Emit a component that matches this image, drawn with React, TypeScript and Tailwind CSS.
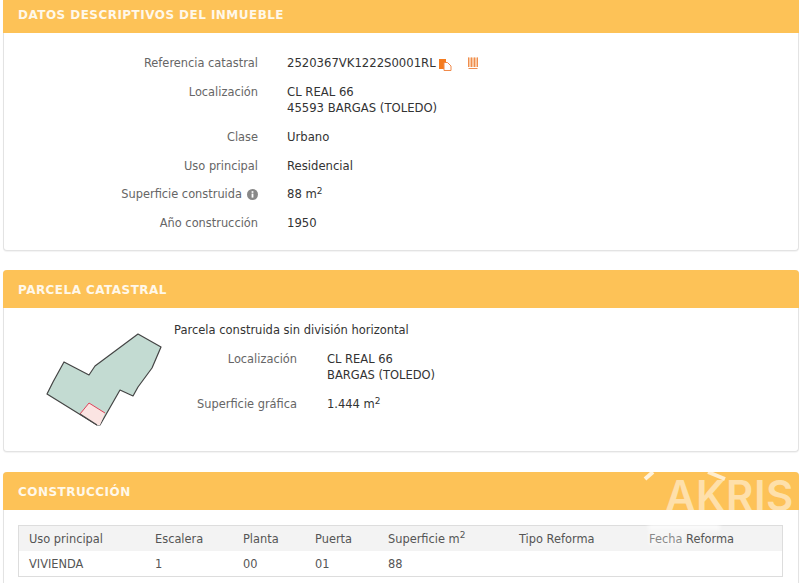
import React from 'react';

const Row = ({ label, children, info }: { label: string; children: React.ReactNode; info?: boolean }) => (
  <div className="flex">
    <div className="w-[254px] shrink-0 flex justify-end items-center h-[16px] gap-[5px] text-[#666666] text-[11.4px]">
      {label}
      {info && (
        <svg width="11" height="11" viewBox="0 0 11 11">
          <circle cx="5.5" cy="5.5" r="5.5" fill="#888888" />
          <rect x="4.6" y="4.6" width="1.8" height="4" fill="#ffffff" />
          <rect x="4.6" y="2.2" width="1.8" height="1.6" fill="#ffffff" />
        </svg>
      )}
    </div>
    <div className="ml-[29px] text-[#333333] text-[11.65px]">{children}</div>
  </div>
);

const Card = ({ title, className, headerClass, children }: { title: string; className: string; headerClass: string; children: React.ReactNode }) => (
  <section className={`ml-[3px] mr-px border border-t-0 border-[#e3e3e3] rounded-[4px] bg-white shadow-[0_1px_1px_rgba(0,0,0,0.05)] ${className}`}>
    <h2 className={`bg-[#fdc257] -mx-px rounded-t-[4px] pl-[15px] flex items-center text-[#fff8ea] font-bold text-[12px] tracking-[0.46px] ${headerClass}`}>{title}</h2>
    {children}
  </section>
);

const cols = 'grid grid-cols-[126px_88px_72px_73px_131px_130px_1fr] pl-[10px] h-[25px] items-center';

const App = () => {
  return (
    <div className="relative w-[800px] h-[583px] overflow-hidden bg-white font-['DejaVu_Sans','Liberation_Sans',sans-serif] text-[11.5px] leading-[16px]">
      <Card title="DATOS DESCRIPTIVOS DEL INMUEBLE" className="h-[251px] rounded-t-none" headerClass="h-[33px] pb-[3px] rounded-t-none">
        <div className="pt-[22px] flex flex-col">
          <div className="mb-[13px]">
            <Row label="Referencia catastral">
              <span className="flex items-center">
                2520367VK1222S0001RL
                <svg className="ml-[3px] mt-[2px]" width="13" height="13" viewBox="0 0 13 13">
                  <path d="M0 1h7v10H0z" fill="#f57c1f" />
                  <path d="M5 4.5h3.5l3.5 3.5v4.5H5z" fill="#ffffff" stroke="#f08a4a" strokeWidth="1" />
                </svg>
                <svg className="ml-[15px]" width="12" height="12" viewBox="0 0 12 12">
                  <path d="M1 0.5h10v9.5H1z" fill="#f9c9a4" />
                  <path d="M1.5 0.5v9.5M4.5 0.5v9.5M7.5 0.5v9.5M10.5 0.5v9.5" stroke="#ef8d4e" strokeWidth="1" />
                  <path d="M1.5 11.5h9" stroke="#ef8d4e" strokeWidth="1" />
                </svg>
              </span>
            </Row>
          </div>
          <div className="mb-[13px]">
            <Row label="Localización">
              CL REAL 66
              <br />
              45593 BARGAS (TOLEDO)
            </Row>
          </div>
          <div className="mb-[13px]">
            <Row label="Clase">Urbano</Row>
          </div>
          <div className="mb-[12px]">
            <Row label="Uso principal">Residencial</Row>
          </div>
          <div className="mb-[13px]">
            <Row label="Superficie construida" info>
              88 m<sup className="text-[9px] leading-none">2</sup>
            </Row>
          </div>
          <Row label="Año construcción">1950</Row>
        </div>
      </Card>

      <Card title="PARCELA CATASTRAL" className="mt-[19px] h-[182px]" headerClass="h-[38px] pt-px">
        <div className="flex">
          <svg className="ml-[40px] mt-[22px] shrink-0" width="120" height="98" viewBox="0 0 120 98">
            <path
              d="M3 64L9 52L20 32L45 45L51 36L94 4L117 17L108 38L94 57L89 66L76 60L56 95L53 95Z"
              fill="#c3dbd2"
              stroke="#444444"
              strokeWidth="1.2"
              strokeLinejoin="round"
            />
            <path d="M36 84L45 73L61 83L56 95L53 95Z" fill="#fbe4e2" />
            <path d="M36 84L45 73L61 83" fill="none" stroke="#e0425a" strokeWidth="1" />
            <path d="M36 84L53 95" fill="none" stroke="#444444" strokeWidth="1.2" />
          </svg>
          <div className="ml-[10px] pt-[14px] text-[#333333] text-[11.5px]">
            <div>Parcela construida sin división horizontal</div>
            <div className="mt-[13px] flex">
              <div className="w-[123px] text-right text-[#666666] text-[11.4px]">Localización</div>
              <div className="ml-[30px]">
                CL REAL 66
                <br />
                BARGAS (TOLEDO)
              </div>
            </div>
            <div className="mt-[13px] flex">
              <div className="w-[123px] text-right text-[#666666] text-[11.4px]">Superficie gráfica</div>
              <div className="ml-[30px]">
                1.444 m<sup className="text-[9px] leading-none">2</sup>
              </div>
            </div>
          </div>
        </div>
      </Card>

      <Card title="CONSTRUCCIÓN" className="mt-[20px] h-[120px]" headerClass="h-[38px] pt-px">
        <div className="ml-[14px] mr-[15px] mt-[15px] border border-[#dddddd] text-[#555555] text-[11.4px]">
          <div className={`${cols} bg-[#f3f3f3]`}>
            <span>Uso principal</span>
            <span>Escalera</span>
            <span>Planta</span>
            <span>Puerta</span>
            <span>
              Superficie m<sup className="text-[9px] leading-none">2</sup>
            </span>
            <span>Tipo Reforma</span>
            <span>Fecha Reforma</span>
          </div>
          <div className={cols}>
            <span>VIVIENDA</span>
            <span>1</span>
            <span>00</span>
            <span>01</span>
            <span>88</span>
          </div>
        </div>
      </Card>

      <div className="absolute left-[665px] top-[475px] font-['Inter',sans-serif] font-semibold text-[42px] tracking-[0.5px] leading-none text-white/50 pointer-events-none">AKRIS</div>
      <svg className="absolute left-[640px] top-[466px] pointer-events-none" width="100" height="20" viewBox="0 0 100 20" fill="none">
        <path d="M5 13L13 6" stroke="#ffffff" strokeOpacity="0.8" strokeWidth="4" />
        <path d="M68 6L85 13" stroke="#ffffff" strokeOpacity="0.7" strokeWidth="4" />
      </svg>
      <div className="absolute left-[648px] top-[524px] w-[72px] h-[6px] bg-white/70 blur-[2px] pointer-events-none" />
      <div className="absolute left-[648px] top-[531px] w-[36px] h-[14px] bg-white/30 blur-[1px] pointer-events-none" />
    </div>
  );
};

export default App;
